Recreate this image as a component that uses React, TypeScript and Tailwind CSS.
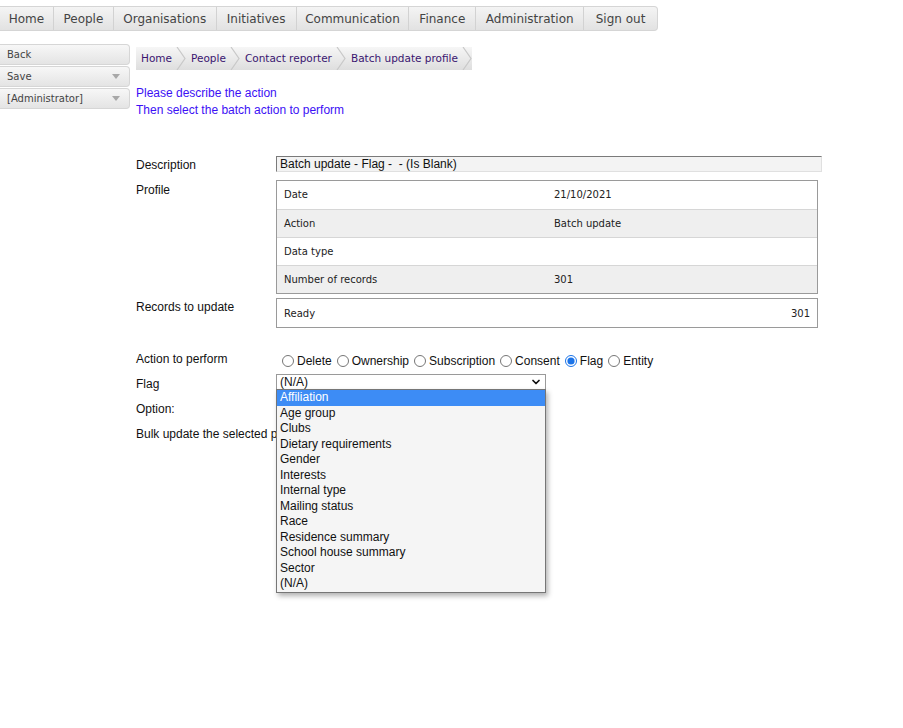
import { ChevronDown } from 'lucide-react';

const navItems = [
  { label: 'Home', w: 'w-[53px]' },
  { label: 'People', w: 'w-[60px]' },
  { label: 'Organisations', w: 'w-[103px]' },
  { label: 'Initiatives', w: 'w-[80px]' },
  { label: 'Communication', w: 'w-[113px]' },
  { label: 'Finance', w: 'w-[67px]' },
  { label: 'Administration', w: 'w-[108px]' },
  { label: 'Sign out', w: 'w-[74px]' },
];

const crumbs = ['Home', 'People', 'Contact reporter', 'Batch update profile'];

const profileRows = [
  { label: 'Date', value: '21/10/2021' },
  { label: 'Action', value: 'Batch update' },
  { label: 'Data type', value: '' },
  { label: 'Number of records', value: '301' },
];

const actions = ['Delete', 'Ownership', 'Subscription', 'Consent', 'Flag', 'Entity'];

const flagOptions = [
  'Affiliation',
  'Age group',
  'Clubs',
  'Dietary requirements',
  'Gender',
  'Interests',
  'Internal type',
  'Mailing status',
  'Race',
  'Residence summary',
  'School house summary',
  'Sector',
  '(N/A)',
];

function Crumb({ label }: { label: string }) {
  return (
    <div className="flex h-full items-center">
      <span className="whitespace-nowrap pl-[5px] pr-[4px]">{label}</span>
      <svg width="10" height="23" viewBox="0 0 10 23" className="shrink-0">
        <polyline points="1,0 9,11.5 1,23" fill="none" stroke="#c8c8c8" strokeWidth="1.2" />
      </svg>
    </div>
  );
}

function SideButton({ label, menu }: { label: string; menu?: boolean }) {
  return (
    <div className="flex h-[21px] items-center justify-between rounded-r-[4px] border border-l-0 border-[#d6d6d6] bg-gradient-to-b from-[#f7f7f7] to-[#e4e4e4] pl-[7px] pr-[9px] text-[10px] text-[#444]">
      <span>{label}</span>
      {menu && (
        <svg width="8" height="5" viewBox="0 0 8 5">
          <polygon points="0,0 8,0 4,5" fill="#a8a8a8" />
        </svg>
      )}
    </div>
  );
}

export default function App() {
  return (
    <div className="min-h-[728px] bg-white font-['DejaVu_Sans',sans-serif] text-[#222]">
      {/* Top menu */}
      <div className="pt-[6px]">
        <div className="flex h-[25px] w-[658px] overflow-hidden rounded-r-[4px] border border-l-0 border-[#d5d5d5] bg-gradient-to-b from-[#f4f4f4] to-[#e2e2e2]">
          {navItems.map((item, i) => (
            <div
              key={item.label}
              className={`${item.w} flex items-center justify-center text-[12px] text-[#444] ${i > 0 ? 'border-l border-[#d2d2d2]' : ''}`}
            >
              {item.label}
            </div>
          ))}
        </div>
      </div>

      <div className="flex">
        {/* Left buttons */}
        <div className="mt-[13px] flex w-[130px] flex-col gap-[1px]">
          <SideButton label="Back" />
          <SideButton label="Save" menu />
          <SideButton label="[Administrator]" menu />
        </div>

        {/* Main */}
        <div className="ml-[6px] w-[690px]">
          <div className="mt-[16px] flex h-[23px] w-fit items-center bg-gradient-to-b from-[#f6f6f6] to-[#dedede] text-[10.5px] text-[#3a1670]">
            {crumbs.map((c) => (
              <Crumb key={c} label={c} />
            ))}
          </div>

          <div className="mt-[15px] font-['Liberation_Sans',Arial,sans-serif] text-[12px] leading-[17px] text-[#3c10f5]">
            <p>Please describe the action</p>
            <p>Then select the batch action to perform</p>
          </div>

          <div className="font-['Liberation_Sans',Arial,sans-serif] text-[12px] leading-[16px] text-[#111]">
            {/* Description */}
            <div className="mt-[37px] flex">
              <div className="w-[140px] shrink-0 pt-[1px]">Description</div>
              <div className="h-[16px] w-[546px] border border-t-[#7a7a7a] border-r-[#e0e0e0] border-b-[#e0e0e0] border-l-[#7a7a7a] bg-[#f3f3f3] pl-[3px] leading-[14px]">
                Batch update - Flag -&nbsp; - (Is Blank)
              </div>
            </div>

            {/* Profile */}
            <div className="mt-[7px] flex">
              <div className="w-[140px] shrink-0 pt-[2px]">Profile</div>
              <div className="w-[542px] border border-[#9a9a9a] font-['DejaVu_Sans',sans-serif] text-[10px] text-[#222]">
                {profileRows.map((r, i) => (
                  <div
                    key={r.label}
                    className={`grid h-[28px] grid-cols-[277px_1fr] items-center ${i % 2 === 1 ? 'bg-[#efefef]' : 'bg-white'} ${i > 0 ? 'border-t border-[#d6d6d6]' : ''}`}
                  >
                    <span className="pl-[7px]">{r.label}</span>
                    <span>{r.value}</span>
                  </div>
                ))}
              </div>
            </div>

            {/* Records to update */}
            <div className="mt-[4px] flex">
              <div className="w-[140px] shrink-0 pt-[1px]">Records to update</div>
              <div className="flex h-[30px] w-[542px] items-center justify-between border border-[#9a9a9a] px-[7px] pt-[1px] font-['DejaVu_Sans',sans-serif] text-[10px] text-[#222]">
                <span>Ready</span>
                <span>301</span>
              </div>
            </div>

            {/* Action to perform */}
            <div className="mt-[23px] flex">
              <div className="w-[140px] shrink-0">Action to perform</div>
              <div className="mt-[2px] flex h-[16px] items-center">
                {actions.map((a) => (
                  <label key={a} className="ml-[5px] flex items-center gap-[3px] first:ml-[6px]">
                    <input
                      type="radio"
                      name="action"
                      defaultChecked={a === 'Flag'}
                      className="m-0 h-[12px] w-[12px] accent-[#1a73e8]"
                    />
                    <span>{a}</span>
                  </label>
                ))}
              </div>
            </div>

            {/* Flag */}
            <div className="mt-[3px] flex items-start">
              <div className="w-[140px] shrink-0 pt-[4px]">Flag</div>
              <div className="relative mt-[2px] h-[15px]">
                <div className="flex h-[15px] w-[270px] items-center justify-between border border-[#9a9a9a] border-b-0 bg-white pl-[3px] pr-[3px]">
                  <span className="leading-[14px]">(N/A)</span>
                  <ChevronDown size={12} strokeWidth={3.5} className="text-[#111]" />
                </div>
                <div className="absolute left-0 top-[15px] z-10 w-[270px] border border-[#767676] bg-[#f5f5f5] shadow-[2px_3px_5px_rgba(0,0,0,0.3)]">
                  {flagOptions.map((o, i) => (
                    <div
                      key={o}
                      className={`h-[15.5px] pl-[3px] leading-[15.5px] ${i === 0 ? 'bg-[#3d8cf5] text-white' : 'text-[#111]'}`}
                    >
                      {o}
                    </div>
                  ))}
                </div>
              </div>
            </div>

            {/* Option */}
            <div className="mt-[9px]">Option:</div>

            {/* Bulk update */}
            <div className="mt-[9px]">Bulk update the selected people</div>
          </div>
        </div>
      </div>
    </div>
  );
}
